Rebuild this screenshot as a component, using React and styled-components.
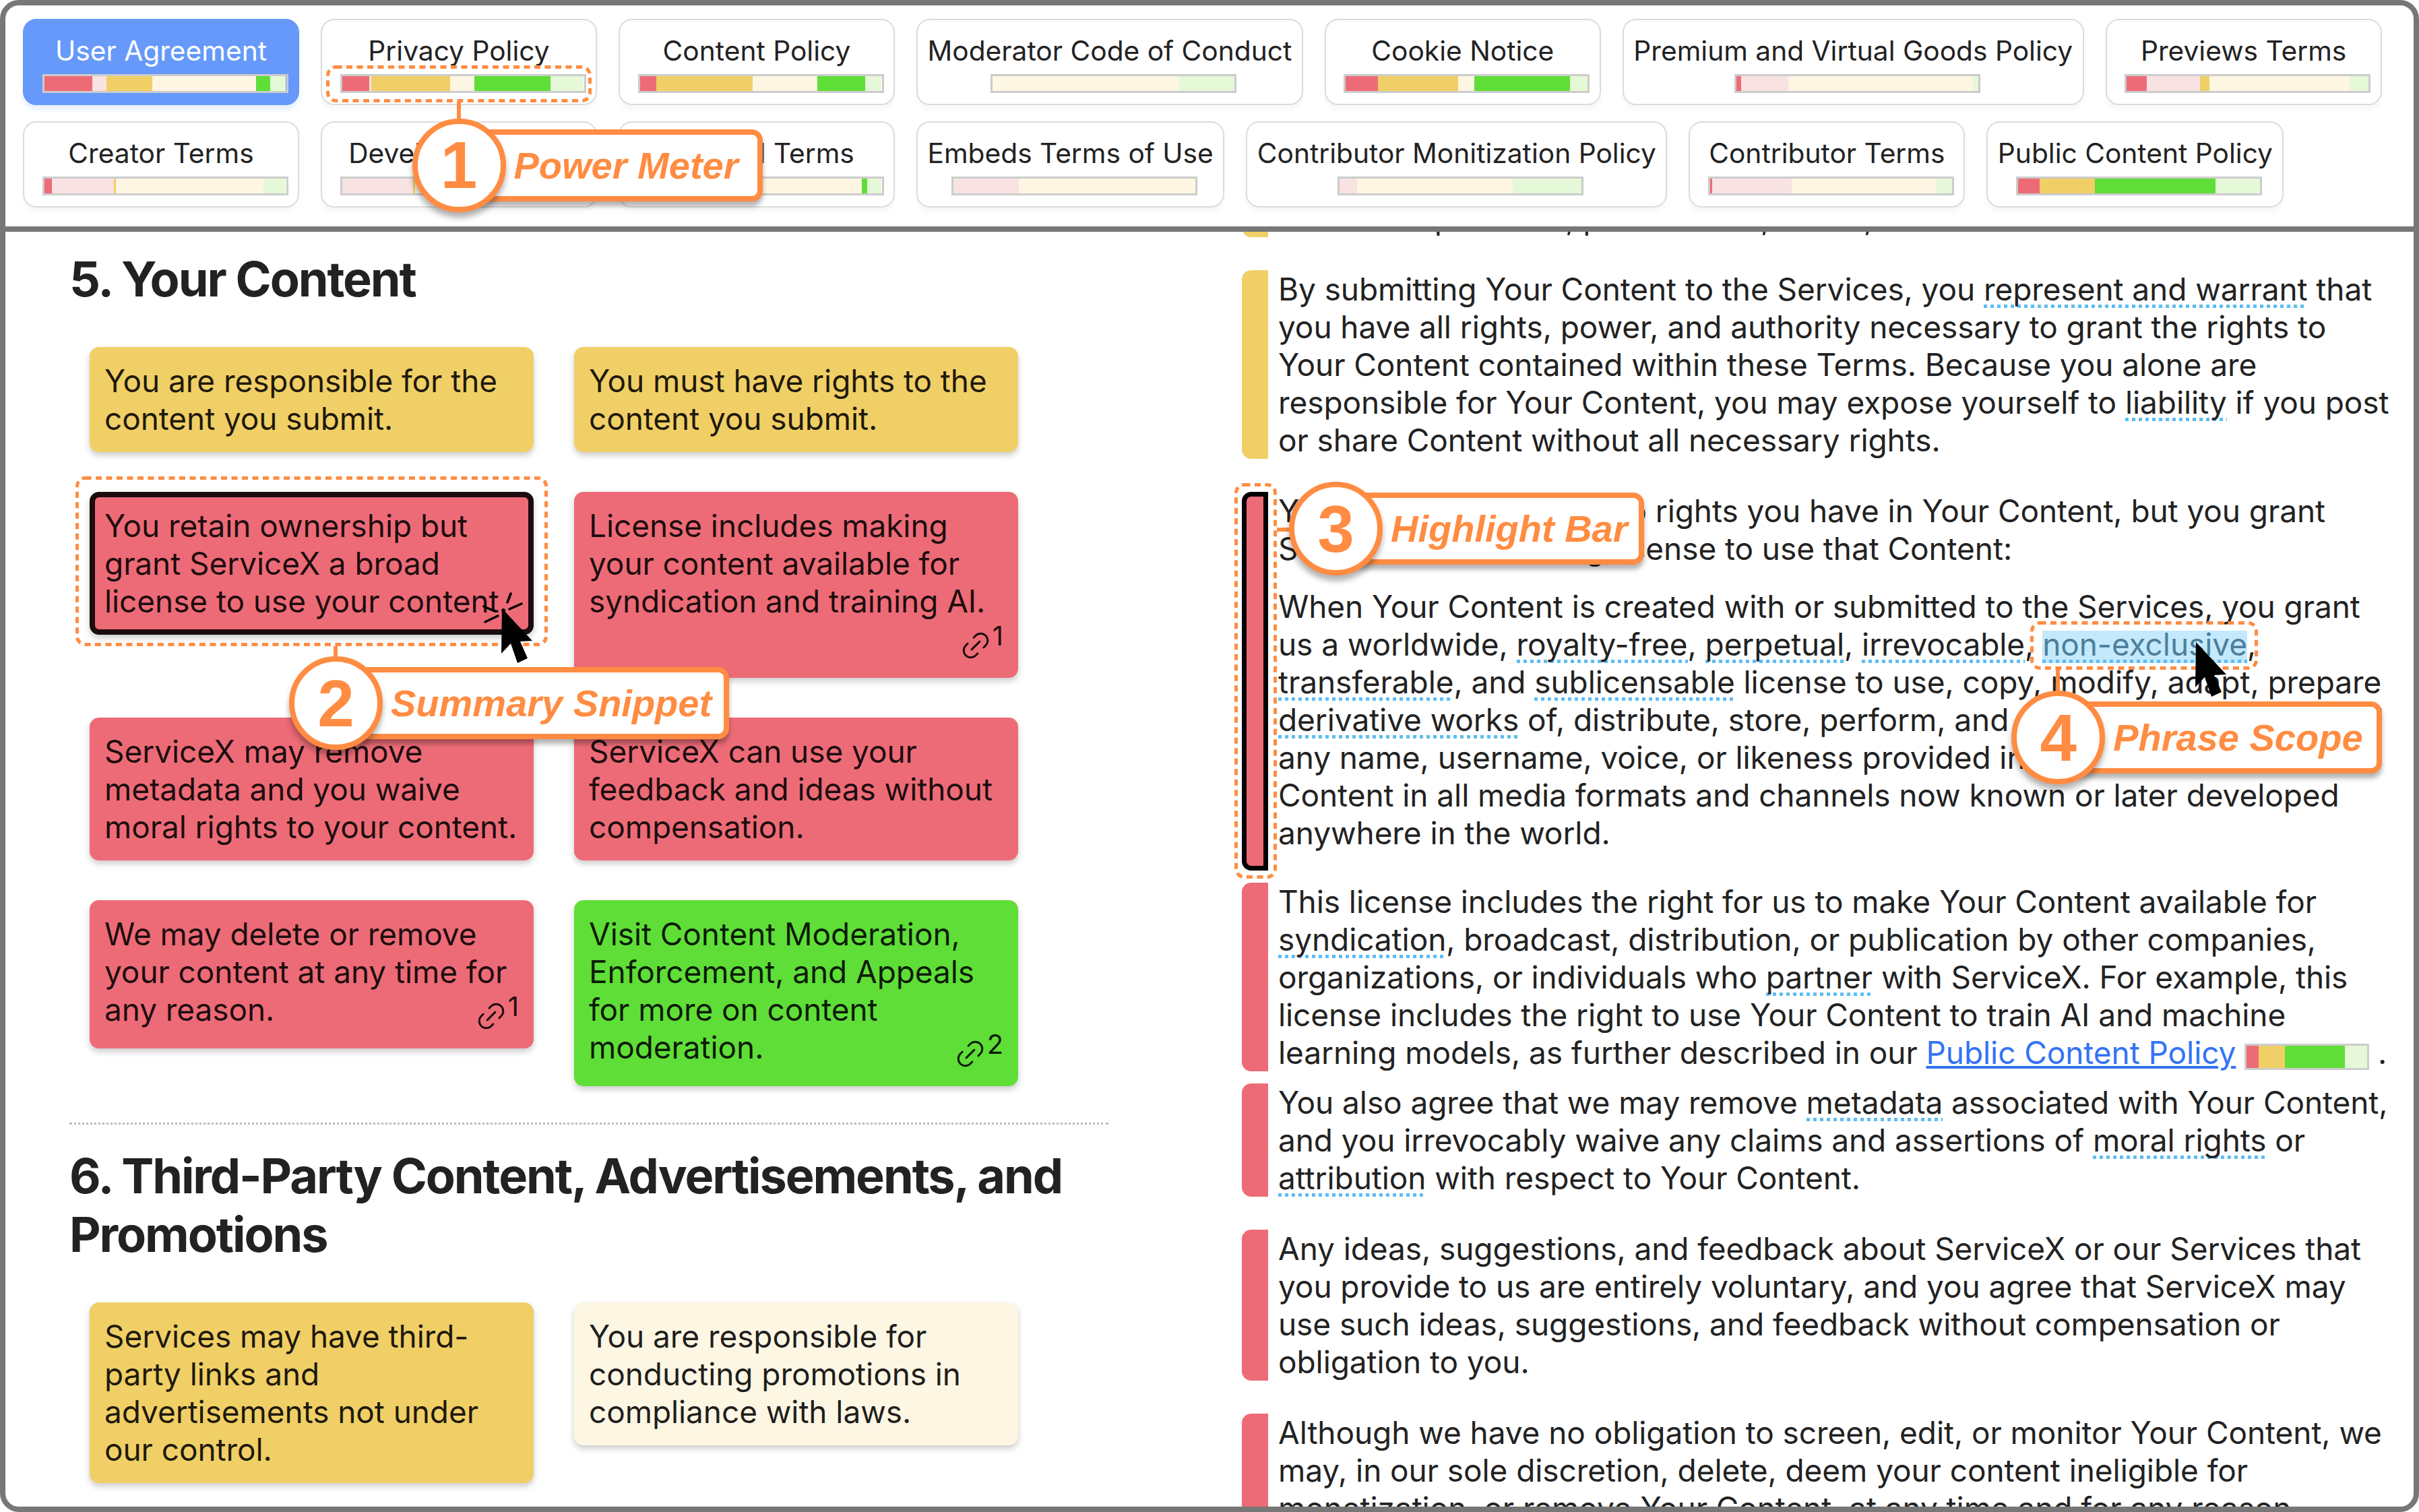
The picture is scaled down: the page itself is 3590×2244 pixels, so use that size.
import React from 'react';
import styled, { createGlobalStyle } from 'styled-components';
import { Link2 } from 'lucide-react';

const ORANGE = '#ff8c42';
const COLORS = {
  red: '#ed6b77',
  lightRed: '#f8e2e2',
  yellow: '#f0cf66',
  lightYellow: '#fdf6e3',
  green: '#5fde38',
  lightGreen: '#e5f8d8',
};

const TABS = [
  { name: 'User Agreement', active: true, parts: [['red', 19.9], ['lightRed', 5.9], ['yellow', 18.9], ['lightYellow', 42.8], ['green', 5.9], ['lightGreen', 6.6]] },
  { name: 'Privacy Policy', annotated: true, parts: [['red', 11.2], ['lightRed', 1], ['yellow', 32.6], ['lightYellow', 10], ['green', 31.5], ['lightGreen', 13.7]] },
  { name: 'Content Policy', parts: [['red', 6.8], ['yellow', 39.8], ['lightYellow', 26.8], ['green', 19.9], ['lightGreen', 6.7]] },
  { name: 'Moderator Code of Conduct', parts: [['lightYellow', 77], ['lightGreen', 23]] },
  { name: 'Cookie Notice', parts: [['red', 13.3], ['yellow', 33.1], ['lightYellow', 6.7], ['green', 39.7], ['lightGreen', 7.2]] },
  { name: 'Premium and Virtual Goods Policy', parts: [['red', 2.1], ['lightRed', 19.5], ['lightYellow', 76.3], ['lightGreen', 2.1]] },
  { name: 'Previews Terms', parts: [['red', 8.2], ['lightRed', 22], ['yellow', 4], ['lightYellow', 58], ['lightGreen', 7.8]] },
  { name: 'Creator Terms', parts: [['red', 3.2], ['lightRed', 25.6], ['yellow', 1], ['lightYellow', 60.8], ['lightGreen', 9.4]] },
  { name: 'Developer Terms', parts: [['lightRed', 29.5], ['yellow', 0.7], ['lightYellow', 61.8], ['lightGreen', 8]] },
  { name: 'Channel Terms', parts: [['lightYellow', 91.7], ['green', 2.2], ['lightGreen', 6.1]] },
  { name: 'Embeds Terms of Use', parts: [['lightRed', 27.1], ['lightYellow', 72.9]] },
  { name: 'Contributor Monitization Policy', parts: [['lightRed', 7.2], ['lightYellow', 64.2], ['lightGreen', 28.6]] },
  { name: 'Contributor Terms', parts: [['red', 1], ['lightRed', 32.7], ['lightYellow', 60], ['lightGreen', 6.3]] },
  { name: 'Public Content Policy', parts: [['red', 8.9], ['yellow', 22.7], ['green', 49.8], ['lightGreen', 18.6]] },
];

const INLINE_METER = [['red', 10], ['yellow', 22], ['green', 49.7], ['lightGreen', 18.3]];

function DashedBox({ className }) {
  return (
    <DashedSvg className={className}>
      <DashedRect />
    </DashedSvg>
  );
}

function Callout({ number, label, endPad = 16, className }) {
  return (
    <CalloutWrap className={className}>
      <Badge>{number}</Badge>
      <CalloutLabel $endPad={endPad}>{label}</CalloutLabel>
    </CalloutWrap>
  );
}

function Cursor({ className, clicking }) {
  return (
    <CursorSvg className={className} viewBox="-30 -24 80 110">
      <polygon points="0,0 45,48 27,49 38,74 23,81 13,52 -1,67" fill="#000" />
      {clicking && (
        <g stroke="#000" strokeWidth="3.5" strokeLinecap="round">
          <line x1="8" y1="-9" x2="13" y2="-22" />
          <line x1="11" y1="1" x2="29" y2="-7" />
          <line x1="-25" y1="20" x2="-6" y2="11" />
          <line x1="-27" y1="-3" x2="-11" y2="4" />
        </g>
      )}
    </CursorSvg>
  );
}

function Segments({ parts }) {
  return parts.map(([color, pct], i) => (
    <Segment key={i} $color={COLORS[color]} style={{ width: `${pct}%` }} />
  ));
}

function LinkCount({ count }) {
  return (
    <LinkNote>
      <Link2 size={50} strokeWidth={1.4} />
      <sup>{count}</sup>
    </LinkNote>
  );
}

export default function App() {
  return (
    <>
      <GlobalStyle />
      <Frame>
        <Header>
          {TABS.map((tab) => (
            <Tab key={tab.name} $active={tab.active}>
              <TabName>{tab.name}</TabName>
              <Meter>
                <Segments parts={tab.parts} />
                {tab.annotated && (
                  <>
                    <MeterOutline />
                    <MeterConnector />
                    <PowerCallout number="1" label="Power Meter" endPad={28} />
                  </>
                )}
              </Meter>
            </Tab>
          ))}
        </Header>
        <Body>
          <SummaryPane>
            <SectionTitle>5. Your Content</SectionTitle>
            <CardGrid>
              <Card $color="yellow">You are responsible for the content you submit.</Card>
              <Card $color="yellow">You must have rights to the content you submit.</Card>
              <Card $color="red" $selected>
                You retain ownership but grant ServiceX a broad license to use your content.
                <CardOutline />
                <CardConnector />
                <SummaryCallout number="2" label="Summary Snippet" endPad={18} />
                <CardCursor clicking />
              </Card>
              <Card $color="red">
                License includes making your content available for syndication and training AI.
                <LinkCount count={1} />
              </Card>
              <Card $color="red">ServiceX may remove metadata and you waive moral rights to your content.</Card>
              <Card $color="red">ServiceX can use your feedback and ideas without compensation.</Card>
              <Card $color="red">
                We may delete or remove your content at any time for any reason.
                <LinkCount count={1} />
              </Card>
              <Card $color="green">
                Visit Content Moderation, Enforcement, and Appeals for more on content moderation.
                <LinkCount count={2} />
              </Card>
            </CardGrid>
            <SectionRule />
            <SectionTitle>6. Third-Party Content, Advertisements, and Promotions</SectionTitle>
            <CardGrid>
              <Card $color="yellow">Services may have third-party links and advertisements not under our control.</Card>
              <Card $color="lightYellow">You are responsible for conducting promotions in compliance with laws.</Card>
            </CardGrid>
          </SummaryPane>
          <DocumentPane>
            <Block $first>
              <Bar $color="yellow" />
              <BlockText>
                <p>You are to post it all, post it in full, or not, as allowed under the Terms.</p>
              </BlockText>
            </Block>
            <Block>
              <Bar $color="yellow" />
              <BlockText>
                <p>
                  By submitting Your Content to the Services, you <Term>represent and warrant</Term> that you have all
                  rights, power, and authority necessary to grant the rights to Your Content contained within these
                  Terms. Because you alone are responsible for Your Content, you may expose yourself to{' '}
                  <Term>liability</Term> if you post or share Content without all necessary rights.
                </p>
              </BlockText>
            </Block>
            <Block>
              <Bar $color="red" $selected>
                <BarOutline />
                <BarConnector />
                <BarCallout number="3" label="Highlight Bar" />
              </Bar>
              <BlockText $tail>
                <p>
                  You retain any ownership rights you have in Your Content, but you grant ServiceX the following license
                  to use that Content:
                </p>
                <p>
                  When Your Content is created with or submitted to the Services, you grant us a worldwide,{' '}
                  <Term>royalty-free</Term>, <Term>perpetual</Term>, <Term>irrevocable</Term>,{' '}
                  <ScopedTerm>
                    non-exclusive
                    <PhraseOutline />
                    <PhraseConnector />
                    <PhraseCallout number="4" label="Phrase Scope" endPad={20} />
                    <PhraseCursor />
                  </ScopedTerm>
                  , <Term>transferable</Term>, and <Term>sublicensable</Term> license to use, copy, modify, adapt,
                  prepare <Term>derivative works</Term> of, distribute, store, perform, and display Your Content and
                  any name, username, voice, or likeness provided in connection with Your Content in all media formats
                  and channels now known or later developed anywhere in the world.
                </p>
              </BlockText>
            </Block>
            <Block $tight>
              <Bar $color="red" />
              <BlockText>
                <p>
                  This license includes the right for us to make Your Content available for <Term>syndication</Term>,
                  broadcast, distribution, or publication by other companies, organizations, or individuals who{' '}
                  <Term>partner</Term> with ServiceX. For example, this license includes the right to use Your Content
                  to train AI and machine learning models, as further described in our{' '}
                  <PolicyLink href="#">Public Content Policy</PolicyLink>{' '}
                  <InlineMeter>
                    <Segments parts={INLINE_METER} />
                  </InlineMeter>{' '}
                  .
                </p>
              </BlockText>
            </Block>
            <Block $tight>
              <Bar $color="red" />
              <BlockText>
                <p>
                  You also agree that we may remove <Term>metadata</Term> associated with Your Content, and you
                  irrevocably waive any claims and assertions of <Term>moral rights</Term> or{' '}
                  <Term>attribution</Term> with respect to Your Content.
                </p>
              </BlockText>
            </Block>
            <Block>
              <Bar $color="red" />
              <BlockText>
                <p>
                  Any ideas, suggestions, and feedback about ServiceX or our Services that you provide to us are
                  entirely voluntary, and you agree that ServiceX may use such ideas, suggestions, and feedback without
                  compensation or obligation to you.
                </p>
              </BlockText>
            </Block>
            <Block>
              <Bar $color="red" />
              <BlockText>
                <p>
                  Although we have no obligation to screen, edit, or monitor Your Content, we may, in our sole
                  discretion, delete, deem your content ineligible for monetization, or remove Your Content, at any
                  time and for any reason.
                </p>
              </BlockText>
            </Block>
          </DocumentPane>
        </Body>
      </Frame>
    </>
  );
}

const GlobalStyle = createGlobalStyle`
  html, body {
    margin: 0;
    background: #fff;
  }

  body {
    font-family: Inter, "Liberation Sans", sans-serif;
    color: #222;
  }

  p {
    margin: 0;
  }
`;

const Frame = styled.div`
  box-sizing: border-box;
  width: 3590px;
  height: 2244px;
  border: 8px solid #777;
  border-radius: 28px;
  overflow: hidden;
  display: flex;
  flex-direction: column;
`;

const Header = styled.header`
  box-sizing: border-box;
  height: 336px;
  flex: none;
  padding: 20px 26px 0;
  border-bottom: 8px solid #777;
  display: flex;
  flex-wrap: wrap;
  align-content: flex-start;
  gap: 24px 32px;
`;

const Tab = styled.div`
  box-sizing: border-box;
  height: 128px;
  padding: 21px 14.5px 0;
  display: flex;
  flex-direction: column;
  align-items: center;
  border: 2px solid ${(p) => (p.$active ? '#6699f9' : '#dcdcdc')};
  border-radius: 20px;
  background: ${(p) => (p.$active ? '#6699f9' : '#fff')};
  color: ${(p) => (p.$active ? '#fff' : '#222')};
  box-shadow: 0 7px 6px ${(p) => (p.$active ? 'rgba(102, 153, 249, 0.15)' : 'rgba(0, 0, 0, 0.03)')};
`;

const TabName = styled.div`
  font-size: 40.7px;
  line-height: 50px;
  white-space: nowrap;
  margin-bottom: 9px;
`;

const Meter = styled.div`
  box-sizing: border-box;
  flex: none;
  position: relative;
  width: 365px;
  height: 28px;
  margin-left: 12px;
  border: 3px solid #ccc;
  display: flex;
`;

const InlineMeter = styled.span`
  box-sizing: border-box;
  display: inline-flex;
  vertical-align: -6px;
  width: 185px;
  height: 39px;
  border: 3px solid #ccc;
`;

const Segment = styled.span`
  display: block;
  height: 100%;
  background: ${(p) => p.$color};
`;

const DashedSvg = styled.svg`
  position: absolute;
  z-index: 4;
  overflow: visible;
  pointer-events: none;
`;

const DashedRect = styled.rect`
  x: 2.5px;
  y: 2.5px;
  width: calc(100% - 5px);
  height: calc(100% - 5px);
  rx: 12px;
  fill: none;
  stroke: ${ORANGE};
  stroke-width: 5px;
  stroke-dasharray: 9 6.5;
`;

const CalloutWrap = styled.div`
  position: absolute;
  z-index: 5;
  display: flex;
  align-items: center;
  font-family: "Liberation Sans", Arial, sans-serif;
  font-weight: 700;
  letter-spacing: 0;
  color: ${ORANGE};
  white-space: nowrap;
`;

const Badge = styled.div`
  box-sizing: border-box;
  position: relative;
  z-index: 1;
  flex: none;
  width: 139px;
  height: 139px;
  margin-right: -48px;
  display: flex;
  align-items: center;
  justify-content: center;
  border: 8px solid ${ORANGE};
  border-radius: 50%;
  background: #fff;
  font-size: 98px;
  box-shadow: 0 8px 8px rgba(0, 0, 0, 0.3);
`;

const CalloutLabel = styled.div`
  box-sizing: border-box;
  height: 107px;
  padding: 0 ${(p) => p.$endPad}px 0 52px;
  display: flex;
  align-items: center;
  border: 8px solid ${ORANGE};
  border-radius: 16px;
  background: #fff;
  font-size: 56px;
  font-style: italic;
  box-shadow: 0 7px 7px rgba(0, 0, 0, 0.3);
`;

const VerticalConnector = styled.div`
  position: absolute;
  z-index: 3;
  width: 6px;
  background: ${ORANGE};
`;

const HorizontalConnector = styled.div`
  position: absolute;
  z-index: 3;
  height: 6px;
  background: ${ORANGE};
`;

const MeterOutline = styled(DashedBox)`
  left: -24px;
  top: -16px;
  width: 394px;
  height: 55px;
`;

const MeterConnector = styled(VerticalConnector)`
  left: 170px;
  top: 39px;
  height: 25px;
`;

const PowerCallout = styled(Callout)`
  left: 104px;
  top: 63px;
`;

const Body = styled.main`
  flex: 1;
  min-height: 0;
  display: flex;
  overflow: hidden;
`;

const SummaryPane = styled.section`
  box-sizing: border-box;
  flex: none;
  width: 1835px;
  padding: 26px 0 0 95px;
`;

const SectionTitle = styled.h2`
  width: 1542px;
  margin: 0;
  font-size: 72px;
  line-height: 87px;
  font-weight: 700;
  letter-spacing: -2.1px;
  color: #222;
`;

const CardGrid = styled.div`
  margin-top: 58px;
  padding-left: 30px;
  display: grid;
  grid-template-columns: 659px 659px;
  gap: 59px 60px;
  align-items: start;
`;

const Card = styled.div`
  box-sizing: border-box;
  position: relative;
  display: flow-root;
  padding: ${(p) => (p.$selected ? '14px' : '22px')};
  border: ${(p) => (p.$selected ? '8px solid #1c0c0e' : '0')};
  border-radius: 14px;
  background: ${(p) => COLORS[p.$color]};
  color: rgba(0, 0, 0, 0.88);
  font-size: 46px;
  line-height: 56px;
  letter-spacing: -0.08px;
  box-shadow: 0 5px 10px rgba(0, 0, 0, 0.2);
`;

const LinkNote = styled.span`
  float: right;
  height: 64px;
  display: flex;
  align-items: flex-end;

  svg {
    transform: rotate(-45deg);
    margin-bottom: 1px;
  }

  sup {
    font-size: 40px;
    line-height: 40px;
    margin-bottom: 20px;
    vertical-align: baseline;
  }
`;

const CardOutline = styled(DashedBox)`
  left: -29px;
  top: -31px;
  width: 701px;
  height: 252px;
`;

const CardConnector = styled(VerticalConnector)`
  left: 354px;
  top: 221px;
  height: 16px;
`;

const SummaryCallout = styled(Callout)`
  left: 288px;
  top: 236px;
`;

const CursorSvg = styled.svg`
  position: absolute;
  z-index: 6;
  width: 80px;
  height: 110px;
`;

const CardCursor = styled(Cursor)`
  left: 574px;
  top: 141px;
`;

const SectionRule = styled.hr`
  width: 1542px;
  margin: 54px 0 32px;
  border: 0;
  border-top: 3px dotted #bbb;
`;

const DocumentPane = styled.section`
  box-sizing: border-box;
  flex: 1;
  min-width: 0;
  padding-right: 22px;
  margin-top: -48px;
  font-size: 46px;
  line-height: 56px;
  letter-spacing: -0.08px;
  color: #222;
`;

const Block = styled.div`
  display: flex;
  gap: 15px;
  margin-top: ${(p) => (p.$first ? '0' : p.$tight ? '18px' : '49px')};
`;

const Bar = styled.div`
  box-sizing: border-box;
  position: relative;
  flex: none;
  width: 39px;
  border: ${(p) => (p.$selected ? '7px solid #000' : '0')};
  border-radius: 14px 0 0 14px;
  background: ${(p) => COLORS[p.$color]};
`;

const BlockText = styled.div`
  flex: 1;
  min-width: 0;
  padding-bottom: ${(p) => (p.$tail ? '28px' : '0')};

  p + p {
    margin-top: 30px;
  }
`;

const BarOutline = styled(DashedBox)`
  left: -18px;
  top: -20px;
  width: 63px;
  height: 587px;
`;

const BarConnector = styled(HorizontalConnector)`
  left: 45px;
  top: 46px;
  width: 24px;
`;

const BarCallout = styled(Callout)`
  left: 63px;
  top: -22px;
`;

const Term = styled.span`
  background: repeating-linear-gradient(90deg, #5cbcf5 0 5px, transparent 5px 10px) left bottom / 100% 5px no-repeat;
`;

const ScopedTerm = styled.span`
  position: relative;
  color: #4d7f9b;
  background:
    repeating-linear-gradient(90deg, #5cbcf5 0 5px, transparent 5px 10px) left bottom / 100% 5px no-repeat,
    linear-gradient(#c4e9fc, #c4e9fc) left bottom / 100% 48px no-repeat;
`;

const PhraseOutline = styled(DashedBox)`
  left: -18px;
  top: -6px;
  width: 338px;
  height: 72px;
`;

const PhraseConnector = styled(VerticalConnector)`
  left: 20px;
  top: 66px;
  height: 32px;
`;

const PhraseCallout = styled(Callout)`
  left: -46px;
  top: 97px;
`;

const PhraseCursor = styled(Cursor)`
  left: 198px;
  top: 1px;
`;

const PolicyLink = styled.a`
  color: #3373f5;
  text-decoration: underline;
`;
